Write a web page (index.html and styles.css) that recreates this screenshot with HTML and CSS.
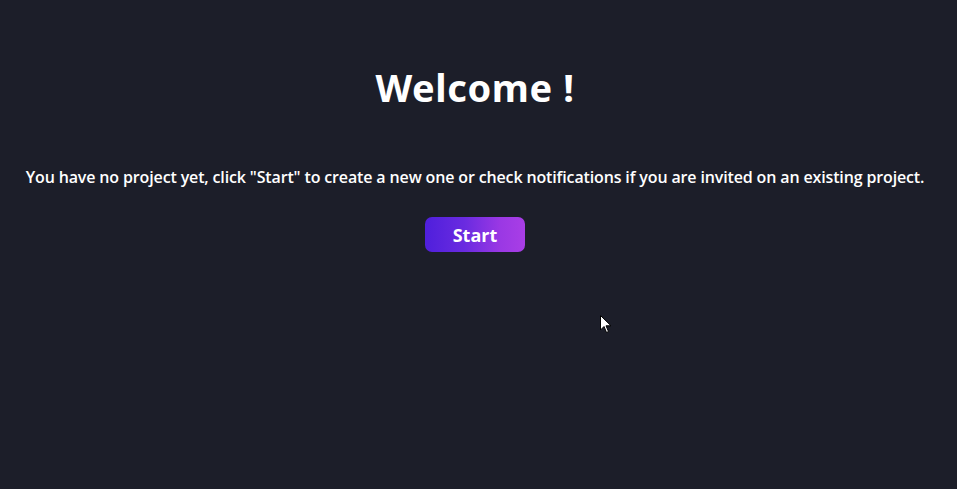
FILE: index.html
```html
<!DOCTYPE html>
<html lang="en">
<head>
    <meta charset="UTF-8">
    <meta name="viewport" content="width=device-width, initial-scale=1.0">
    <title>Welcome</title>
    <link rel="stylesheet" href="styles.css">
</head>
<body>
    <main class="welcome">
        <h1>Welcome !</h1>
        <p>You have no project yet, click "Start" to create a new one or check notifications if you are invited on an existing project.</p>
        <button class="start">Start</button>
    </main>

    <svg class="cursor" width="12" height="19" viewBox="0 0 12 19">
        <path d="M0.5 0.5 L0.5 15 L4 11.5 L6.5 17.5 L8.5 16.5 L6 10.8 L11 10.8 Z" fill="#fff" stroke="#000" stroke-width="1"/>
    </svg>
</body>
</html>
```

FILE: styles.css
```css
body{
    margin: 0;
    height: 100vh;
    background-color: #1c1e29;
    color: #fff;
    font-family: "Open Sans", sans-serif;
    overflow: hidden;
}

.welcome{
    display: flex;
    flex-direction: column;
    align-items: center;
    text-align: center;
    padding-top: 62px;
    padding-right: 7px;

    h1{
        font-family: "Noto Sans", sans-serif;
        font-size: 38px;
        font-weight: 700;
        margin: 0;
        line-height: 50px;
        letter-spacing: 0.6px;
    }
    p{
        font-size: 16px;
        font-weight: 600;
        margin: 54px 0 0;
        line-height: 22px;
        letter-spacing: -0.14px;
    }
    .start{
        margin-top: 29px;
        width: 100px;
        height: 35px;
        border: 0;
        border-radius: 7px;
        background: linear-gradient(90deg, #4f1fdc, #6a2be0 40%, #9a38e4 75%, #a93ee6);
        color: #fff;
        font-family: "Open Sans", sans-serif;
        font-size: 18px;
        font-weight: 700;
        cursor: pointer;
    }
}

.cursor{
    position: absolute;
    left: 600px;
    top: 315px;
}
```
